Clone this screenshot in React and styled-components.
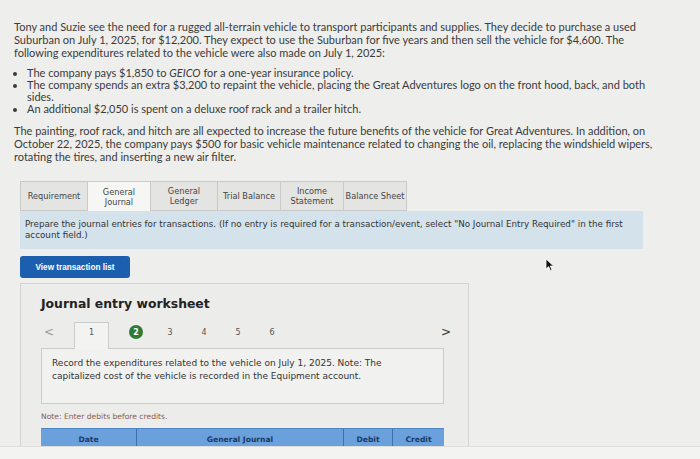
import styled, { createGlobalStyle } from 'styled-components';

const GlobalStyle = createGlobalStyle`
  html, body {
    margin: 0;
    padding: 0;
    background: #eeeeec;
  }
  body {
    width: 700px;
    height: 459px;
    overflow: hidden;
  }
`;

const tabs = [
  { label: 'Requirement', width: 67 },
  { label: ['General', 'Journal'], width: 63, active: true },
  { label: ['General', 'Ledger'], width: 67 },
  { label: 'Trial Balance', width: 63 },
  { label: ['Income', 'Statement'], width: 63 },
  { label: 'Balance Sheet', width: 64 },
];

const steps = [3, 4, 5, 6];

const columns = [
  { label: 'Date', width: 96 },
  { label: 'General Journal', width: 207 },
  { label: 'Debit', width: 49 },
  { label: 'Credit', width: 51 },
];

const App = () => {
  return (
    <>
      <GlobalStyle />
      <Page>
        <Content>
          <Para>
            Tony and Suzie see the need for a rugged all-terrain vehicle to transport participants and supplies. They decide to purchase a used
            Suburban on July 1, 2025, for $12,200. They expect to use the Suburban for five years and then sell the vehicle for $4,600. The
            following expenditures related to the vehicle were also made on July 1, 2025:
          </Para>
          <Bullets>
            <li>The company pays $1,850 to <em>GEICO</em> for a one-year insurance policy.</li>
            <li>The company spends an extra $3,200 to repaint the vehicle, placing the Great Adventures logo on the front hood, back, and both sides.</li>
            <li>An additional $2,050 is spent on a deluxe roof rack and a trailer hitch.</li>
          </Bullets>
          <Para>
            The painting, roof rack, and hitch are all expected to increase the future benefits of the vehicle for Great Adventures. In addition, on
            October 22, 2025, the company pays $500 for basic vehicle maintenance related to changing the oil, replacing the windshield wipers,
            rotating the tires, and inserting a new air filter.
          </Para>

          <Workspace>
            <TabRow>
              {tabs.map((t, i) => (
                <Tab key={i} $w={t.width} $active={t.active}>
                  {Array.isArray(t.label) ? (
                    <>
                      {t.label[0]}
                      <br />
                      {t.label[1]}
                    </>
                  ) : (
                    t.label
                  )}
                </Tab>
              ))}
            </TabRow>
            <Instruction>
              Prepare the journal entries for transactions. (If no entry is required for a transaction/event, select "No Journal Entry Required" in the first
              account field.)
            </Instruction>
            <ListButton>View transaction list</ListButton>

            <Panel>
              <PanelTitle>Journal entry worksheet</PanelTitle>
              <StepRow>
                <Arrow>&lt;</Arrow>
                <StepTab>1</StepTab>
                <Step>
                  <Current>2</Current>
                </Step>
                {steps.map((n) => (
                  <Step key={n}>{n}</Step>
                ))}
                <Arrow $next>&gt;</Arrow>
              </StepRow>
              <TaskBox>
                Record the expenditures related to the vehicle on July 1, 2025. Note: The
                <br />
                capitalized cost of the vehicle is recorded in the Equipment account.
              </TaskBox>
              <Note>Note: Enter debits before credits.</Note>
              <HeaderRow>
                {columns.map((c) => (
                  <HeaderCell key={c.label} $w={c.width}>
                    {c.label}
                  </HeaderCell>
                ))}
              </HeaderRow>
            </Panel>
          </Workspace>
        </Content>
        <BottomStrip />
      </Page>
      <Pointer width="10" height="14" viewBox="0 0 10 14">
        <path d="M1 1 L1 11 L3.6 8.6 L5.4 12.6 L7 11.9 L5.3 8 L8.6 8 Z" fill="#111" stroke="#fff" strokeWidth="0.8" />
      </Pointer>
    </>
  );
};

const Page = styled.div`
  display: flex;
  flex-direction: column;
  height: 459px;
  font-family: Lato, 'Open Sans', sans-serif;
  color: #3b3b3b;
`;

const Content = styled.div`
  padding: 20px 0 0 14px;
`;

const Para = styled.p`
  width: 642px;
  margin: 0;
  font-size: 11px;
  line-height: 13px;
`;

const Bullets = styled.ul`
  width: 642px;
  margin: 8px 0 9px;
  padding-left: 13px;
  font-size: 11px;
  line-height: 12px;

  em {
    font-style: italic;
  }
`;

const Workspace = styled.div`
  margin: 18px 0 0 6px;
  width: 623px;
  font-family: 'DejaVu Sans', Verdana, sans-serif;
`;

const TabRow = styled.div`
  display: flex;
  height: 30px;
`;

const Tab = styled.div`
  box-sizing: border-box;
  width: ${(p) => p.$w}px;
  display: flex;
  align-items: center;
  justify-content: center;
  text-align: center;
  font-size: 8.2px;
  line-height: 10px;
  color: #454545;
  background: ${(p) => (p.$active ? '#f6f6f4' : '#e4e4e2')};
  border: 1px solid #c9c9c7;
  border-right: none;
  border-bottom: ${(p) => (p.$active ? 'none' : '1px solid #c9c9c7')};

  &:last-child {
    border-right: 1px solid #c9c9c7;
  }
`;

const Instruction = styled.div`
  box-sizing: border-box;
  height: 38px;
  padding: 8px 1px 0 5px;
  background: #d4e2ec;
  font-size: 8.75px;
  line-height: 11px;
  color: #333;
`;

const ListButton = styled.button`
  display: block;
  margin-top: 7px;
  width: 110px;
  height: 22px;
  padding: 0;
  border: none;
  border-radius: 3px;
  background: #1c5fae;
  color: #fff;
  font-family: 'Liberation Sans', Arial, sans-serif;
  font-weight: bold;
  font-size: 8.2px;
`;

const Panel = styled.div`
  box-sizing: border-box;
  margin-top: 5px;
  width: 449px;
  height: 163px;
  padding: 0 26px 0 20px;
  border: 1px solid #d3d3d1;
  border-bottom: none;
  background: #ececea;
  overflow: hidden;
`;

const PanelTitle = styled.div`
  margin-top: 13px;
  font-size: 12.4px;
  line-height: 14px;
  font-weight: bold;
  color: #222;
`;

const StepRow = styled.div`
  display: flex;
  align-items: flex-start;
  margin-top: 11px;
  width: 410px;
  height: 26px;
  font-size: 8px;
  color: #555;
`;

const Arrow = styled.div`
  width: 10px;
  line-height: 20px;
  font-size: 12px;
  color: ${(p) => (p.$next ? '#333' : '#999')};
  margin-left: ${(p) => (p.$next ? 'auto' : '3px')};
  margin-right: ${(p) => (p.$next ? '0' : '20px')};
`;

const StepTab = styled.div`
  box-sizing: border-box;
  width: 35px;
  height: 27px;
  line-height: 20px;
  text-align: center;
  background: #f3f3f1;
  border: 1px solid #cbcbc9;
  border-bottom: none;
  position: relative;
  z-index: 1;
  margin-right: 10px;
`;

const Step = styled.div`
  width: 34px;
  height: 20px;
  display: flex;
  align-items: center;
  justify-content: center;
`;

const Current = styled.span`
  width: 14px;
  height: 14px;
  border-radius: 50%;
  background: #2f7a34;
  color: #fff;
  font-weight: bold;
  display: flex;
  align-items: center;
  justify-content: center;
`;

const TaskBox = styled.div`
  box-sizing: border-box;
  width: 403px;
  height: 56px;
  padding: 8px 10px 0;
  background: #f1f1ef;
  border: 1px solid #cbcbc9;
  font-size: 9px;
  line-height: 13px;
  color: #333;
`;

const Note = styled.div`
  margin-top: 8px;
  font-size: 7.6px;
  line-height: 10px;
  color: #8a5c50;
`;

const HeaderRow = styled.div`
  display: flex;
  margin-top: 6px;
  width: 403px;
  height: 22px;
  background: #6aa0dc;
  border-top: 1px solid #4f86c6;
`;

const HeaderCell = styled.div`
  box-sizing: border-box;
  width: ${(p) => p.$w}px;
  padding-top: 5px;
  line-height: 12px;
  text-align: center;
  font-size: 7.6px;
  font-weight: bold;
  color: #1b3a66;
  border-right: 1px solid #3f70ad;

  &:last-child {
    border-right: none;
  }
`;

const BottomStrip = styled.div`
  flex: 1;
  background: #f3f3f1;
  border-top: 1px solid #dededc;
`;

const Pointer = styled.svg`
  position: absolute;
  left: 545px;
  top: 258px;
`;

export default App;
